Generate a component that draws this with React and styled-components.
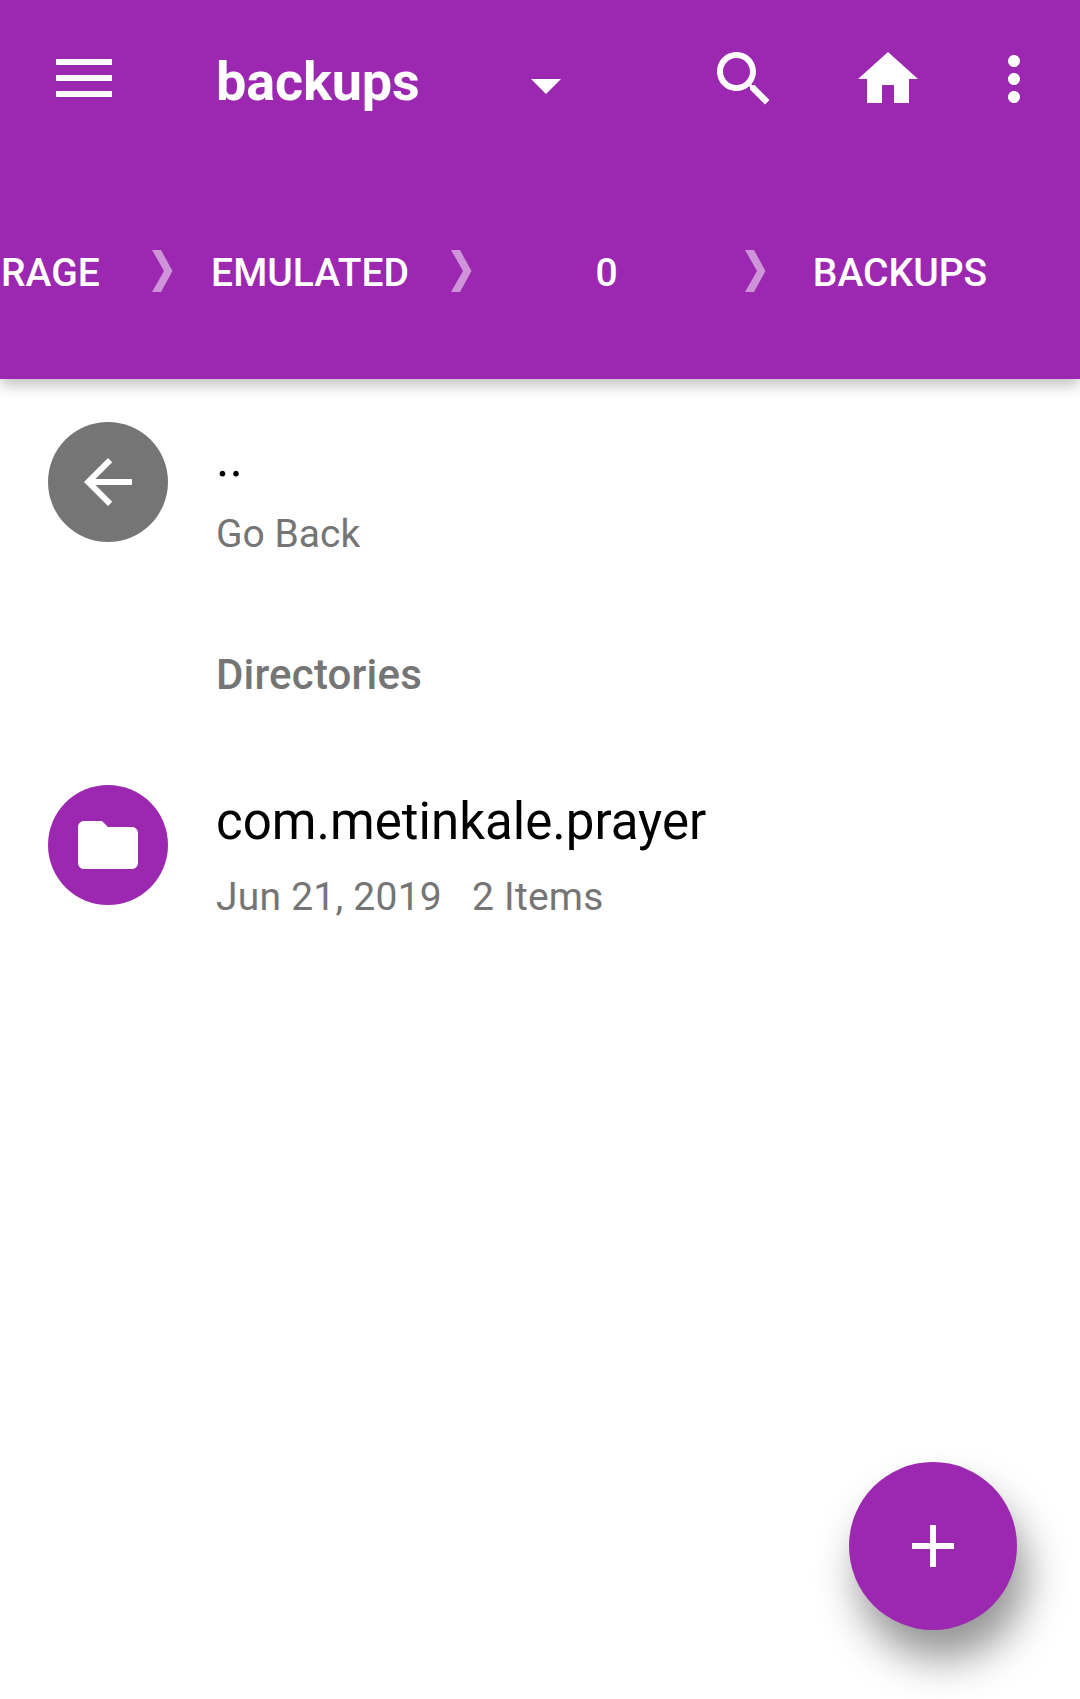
import React from "react";
import styled, { createGlobalStyle } from "styled-components";

const PURPLE = "#9c27b0";
const GREY = "#757575";

const GlobalStyle = createGlobalStyle`
  *, *::before, *::after { box-sizing: border-box; }
  body { margin: 0; background: #fff; }
  svg { display: block; flex: none; }
`;

const Screen = styled.div`
  position: relative;
  display: flex;
  flex-direction: column;
  width: 1080px;
  height: 1699px;
  overflow: hidden;
  background: #fff;
  font-family: Roboto, "Liberation Sans", sans-serif;
`;

const Header = styled.header`
  display: flex;
  flex-direction: column;
  height: 379px;
  flex: none;
  background: ${PURPLE};
  color: #fff;
  box-shadow: 0 5px 15px rgba(0, 0, 0, 0.28);
`;

const Toolbar = styled.div`
  display: flex;
  align-items: center;
  flex: none;
  height: 158px;
  padding: 0 30px 0 56px;
`;

const IconButton = styled.button`
  display: flex;
  flex: none;
  padding: 0;
  border: 0;
  background: none;
  color: inherit;
`;

const MenuButton = styled(IconButton)`
  margin-bottom: 2px;
`;

const PathSelect = styled.div`
  display: flex;
  align-items: center;
  justify-content: space-between;
  width: 345px;
  margin-left: 104px;
  padding-top: 6px;
`;

const Title = styled.h1`
  margin: 0;
  font-size: 54px;
  line-height: 64px;
  font-weight: 700;
  letter-spacing: -0.15px;
`;

const Caret = styled.svg`
  margin-top: 9px;
`;

const Actions = styled.div`
  display: flex;
  margin-left: auto;
`;

const ActionGroup = styled.div`
  display: flex;
  gap: 72px;
  margin-right: 54px;
`;

const Breadcrumbs = styled.nav`
  display: flex;
  align-items: center;
  height: 226px;
  flex: none;
`;

const Crumb = styled.span`
  flex: none;
  display: flex;
  width: ${(p) => p.$width}px;
  padding: 4px ${(p) => p.$end || 0}px 0 ${(p) => p.$start || 0}px;
  justify-content: ${(p) => p.$align || "center"};
  font-size: 39px;
  line-height: 46px;
  font-weight: 500;
  white-space: nowrap;
`;

const List = styled.main`
  display: flex;
  flex-direction: column;
  padding-top: 19px;
`;

const Row = styled.div`
  display: flex;
  height: 192px;
  padding: 24px 48px 0;
  gap: 48px;
`;

const Avatar = styled.div`
  display: flex;
  align-items: center;
  justify-content: center;
  flex: none;
  width: 120px;
  height: 120px;
  border-radius: 50%;
  background: ${(p) => p.$color};
  color: #fff;
`;

const RowText = styled.div`
  display: flex;
  flex-direction: column;
  padding-top: 7px;
`;

const Name = styled.div`
  font-size: 51px;
  line-height: 60px;
  letter-spacing: 0.02px;
  color: #000;
`;

const Meta = styled.div`
  display: flex;
  gap: 30px;
  margin-top: 22px;
  font-size: 39px;
  line-height: 46px;
  letter-spacing: ${(p) => p.$tracking || 0}px;
  color: ${GREY};
`;

const SectionTitle = styled.h2`
  display: flex;
  align-items: center;
  height: 171px;
  margin: 0;
  padding: 0 0 2px 216px;
  font-size: 42px;
  line-height: 50px;
  font-weight: 500;
  letter-spacing: 0.18px;
  color: ${GREY};
`;

const Fab = styled.button`
  position: absolute;
  right: 63px;
  bottom: 69px;
  display: flex;
  align-items: center;
  justify-content: center;
  width: 168px;
  height: 168px;
  padding: 0;
  border: 0;
  border-radius: 50%;
  background: ${PURPLE};
  color: #fff;
  box-shadow: 9px 29px 41px rgba(0, 0, 0, 0.42);
`;

const Glyph = ({ d }) => (
  <svg width="72" height="72" viewBox="0 0 24 24" fill="currentColor" aria-hidden="true">
    <path d={d} />
  </svg>
);

const ICONS = {
  search:
    "M15.5 14h-.79l-.28-.27C15.41 12.59 16 11.11 16 9.5 16 5.91 13.09 3 9.5 3S3 5.91 3 9.5 5.91 16 9.5 16c1.61 0 3.09-.59 4.23-1.57l.27.28v.79l5 4.99L20.49 19l-4.99-5zm-6 0C7.01 14 5 11.99 5 9.5S7.01 5 9.5 5 14 7.01 14 9.5 11.99 14 9.5 14z",
  home: "M10 20v-6h4v6h5v-8h3L12 3 2 12h3v8z",
  more: "M12 8c1.1 0 2-.9 2-2s-.9-2-2-2-2 .9-2 2 .9 2 2 2zm0 2c-1.1 0-2 .9-2 2s.9 2 2 2 2-.9 2-2-.9-2-2-2zm0 6c-1.1 0-2 .9-2 2s.9 2 2 2 2-.9 2-2-.9-2-2-2z",
  back: "M20 11H7.83l5.59-5.59L12 4l-8 8 8 8 1.41-1.41L7.83 13H20v-2z",
  folder:
    "M10 4H4c-1.1 0-1.99.9-1.99 2L2 18c0 1.1.9 2 2 2h16c1.1 0 2-.9 2-2V8c0-1.1-.9-2-2-2h-8l-2-2z",
  add: "M19 13h-6v6h-2v-6H5v-2h6V5h2v6h6v2z",
};

const Separator = () => (
  <svg width="21" height="42" viewBox="0 0 21 42" fill="#ce93d8" aria-hidden="true">
    <path d="M0 0h9l11.5 21L9 42H0l12-21z" />
  </svg>
);

export default function App() {
  return (
    <Screen>
      <GlobalStyle />
      <Header>
        <Toolbar>
          <MenuButton aria-label="Menu">
            <svg width="56" height="38" viewBox="0 0 56 38" fill="currentColor">
              <path d="M0 0h56v6H0zM0 16h56v6H0zM0 32h56v6H0z" />
            </svg>
          </MenuButton>
          <PathSelect>
            <Title>backups</Title>
            <Caret width="30" height="15" viewBox="0 0 30 15" fill="currentColor">
              <path d="M0 0h30L15 15z" />
            </Caret>
          </PathSelect>
          <Actions>
            <ActionGroup>
              <IconButton aria-label="Search">
                <Glyph d={ICONS.search} />
              </IconButton>
              <IconButton aria-label="Home">
                <Glyph d={ICONS.home} />
              </IconButton>
            </ActionGroup>
            <IconButton aria-label="More options">
              <Glyph d={ICONS.more} />
            </IconButton>
          </Actions>
        </Toolbar>
        <Breadcrumbs>
          <Crumb $width={152} $start={1} $align="flex-start">RAGE</Crumb>
          <Separator />
          <Crumb $width={278} $end={4}>EMULATED</Crumb>
          <Separator />
          <Crumb $width={273} $end={4}>0</Crumb>
          <Separator />
          <Crumb $width={270} $end={2}>BACKUPS</Crumb>
        </Breadcrumbs>
      </Header>
      <List>
        <Row>
          <Avatar $color={GREY}>
            <Glyph d={ICONS.back} />
          </Avatar>
          <RowText>
            <Name>..</Name>
            <Meta>Go Back</Meta>
          </RowText>
        </Row>
        <SectionTitle>Directories</SectionTitle>
        <Row>
          <Avatar $color={PURPLE}>
            <Glyph d={ICONS.folder} />
          </Avatar>
          <RowText>
            <Name>com.metinkale.prayer</Name>
            <Meta $tracking={0.24}>
              <span>Jun 21, 2019</span>
              <span>2 Items</span>
            </Meta>
          </RowText>
        </Row>
      </List>
      <Fab aria-label="Add">
        <Glyph d={ICONS.add} />
      </Fab>
    </Screen>
  );
}
